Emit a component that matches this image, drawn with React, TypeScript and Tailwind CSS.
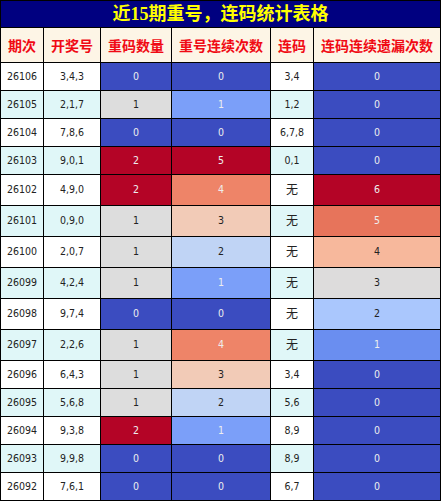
const ROWS: [number, string, number, number, string, number][] = [
  [26106, "3,4,3", 0, 0, "3,4", 0],
  [26105, "2,1,7", 1, 1, "1,2", 0],
  [26104, "7,8,6", 0, 0, "6,7,8", 0],
  [26103, "9,0,1", 2, 5, "0,1", 0],
  [26102, "4,9,0", 2, 4, "无", 6],
  [26101, "0,9,0", 1, 3, "无", 5],
  [26100, "2,0,7", 1, 2, "无", 4],
  [26099, "4,2,4", 1, 1, "无", 3],
  [26098, "9,7,4", 0, 0, "无", 2],
  [26097, "2,2,6", 1, 4, "无", 1],
  [26096, "6,4,3", 1, 3, "3,4", 0],
  [26095, "5,6,8", 1, 2, "5,6", 0],
  [26094, "9,3,8", 2, 1, "8,9", 0],
  [26093, "9,9,8", 0, 0, "8,9", 0],
  [26092, "7,6,1", 0, 0, "6,7", 0],
];

const HEADERS = ["期次", "开奖号", "重码数量", "重号连续次数", "连码", "连码连续遗漏次数"];

// coolwarm-ish colours per column
const COUNT_BG: Record<number, string> = {
  0: "bg-[#3b4cc0] text-[#eeeeee]",
  1: "bg-[#dddddd] text-[#222222]",
  2: "bg-[#b40426] text-[#eeeeee]",
};

const STREAK_BG: Record<number, string> = {
  0: "bg-[#3b4cc0] text-[#eeeeee]",
  1: "bg-[#7b9ff9] text-[#eeeeee]",
  2: "bg-[#c0d4f5] text-[#222222]",
  3: "bg-[#f2cbb7] text-[#222222]",
  4: "bg-[#ee8468] text-[#eeeeee]",
  5: "bg-[#b40426] text-[#eeeeee]",
};

const MISS_BG: Record<number, string> = {
  0: "bg-[#3b4cc0] text-[#eeeeee]",
  1: "bg-[#6a8ef0] text-[#eeeeee]",
  2: "bg-[#aac7fd] text-[#222222]",
  3: "bg-[#dddcdc] text-[#222222]",
  4: "bg-[#f7b89c] text-[#222222]",
  5: "bg-[#e7745b] text-[#eeeeee]",
  6: "bg-[#b40426] text-[#eeeeee]",
};

const cell = "flex items-center justify-center border-r border-b border-black";

export default function App() {
  return (
    <div className="w-[441px] border-t border-l border-black font-['DejaVu_Sans_Condensed','DejaVu_Sans','Noto_Sans_CJK_SC',sans-serif] text-[10.5px]">
      <div className="h-[27px] flex items-center justify-center bg-[#000080] border-r border-b border-black text-[#ffff00] font-bold text-[18px] font-['Liberation_Serif','Noto_Sans_CJK_SC',serif]">
        近15期重号，连码统计表格
      </div>
      <div className="grid grid-cols-[43px_57px_71px_99px_43px_127px]">
        {HEADERS.map((h) => (
          <div
            key={h}
            className={`${cell} h-[35px] bg-[#fdf5e6] text-[#f00a14] font-bold text-[14px] font-['Noto_Sans_CJK_SC',sans-serif]`}
          >
            {h}
          </div>
        ))}
        {ROWS.map((r, i) => {
          const stripe = i % 2 === 0 ? "bg-white" : "bg-[#e0f7f8]";
          const h = r[4] === "无" ? "h-[31px]" : "h-[28px]";
          return [
            <div key={`${r[0]}a`} className={`${cell} ${h} ${stripe} text-[#222222]`}>{r[0]}</div>,
            <div key={`${r[0]}b`} className={`${cell} ${h} ${stripe} text-[#222222]`}>{r[1]}</div>,
            <div key={`${r[0]}c`} className={`${cell} ${h} ${COUNT_BG[r[2]]}`}>{r[2]}</div>,
            <div key={`${r[0]}d`} className={`${cell} ${h} ${STREAK_BG[r[3]]}`}>{r[3]}</div>,
            <div
              key={`${r[0]}e`}
              className={`${cell} ${h} ${stripe} text-[#222222] ${r[4] === "无" ? "text-[12px]" : ""}`}
            >
              {r[4]}
            </div>,
            <div key={`${r[0]}f`} className={`${cell} ${h} ${MISS_BG[r[5]]}`}>{r[5]}</div>,
          ];
        })}
      </div>
    </div>
  );
}
